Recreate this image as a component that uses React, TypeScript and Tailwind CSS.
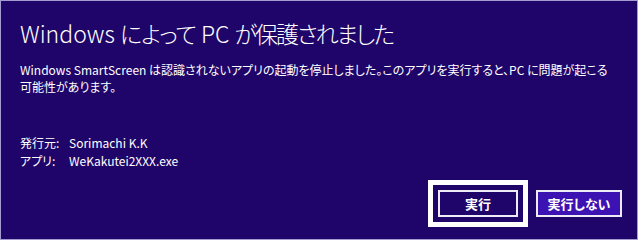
const font = {
  fontFamily: '"Noto Sans CJK JP", "Noto Sans", sans-serif',
  fontFeatureSettings: '"palt"',
}

export default function App() {
  return (
    <div className="w-[642px] h-[240px] bg-white" style={font}>
      <div className="w-[638px] h-[240px] border border-[#a49bd2] bg-[#1f0569] text-white flex flex-col pl-[19px] pr-[15px] pt-[17px] pb-[12px]">
        <h1 className="text-[23px] leading-[30px] font-light">
          Windows <span className="tracking-[-1px]">によって</span> PC{' '}
          <span className="tracking-[-2px]">が保護されました</span>
        </h1>

        <p className="mt-[13px] text-[12px] leading-[17px]">
          <span className="whitespace-nowrap">
            Windows SmartScreen は認識されないアプリの起動を停止しました。このアプリを実行すると、PC に問題が起こる
          </span>
          <br />
          可能性があります。
        </p>

        <div className="mt-[39px] grid grid-cols-[49px_auto] text-[12px] leading-[18px]">
          <span>発行元:</span>
          <span>Sorimachi K.K</span>
          <span>アプリ:</span>
          <span>WeKakutei2XXX.exe</span>
        </div>

        <div className="mt-auto flex items-center justify-end gap-[8px]">
          <div className="border-[5px] border-white p-[5px]">
            <button className="w-[80px] h-[27px] border-2 border-[#ecebf6] bg-[#1f0569] text-[13px] font-bold leading-none">
              実行
            </button>
          </div>
          <button className="w-[86px] h-[27px] border-2 border-[#ecebf6] bg-[#3d12b2] text-[13px] font-bold leading-none">
            実行しない
          </button>
        </div>
      </div>
    </div>
  )
}
